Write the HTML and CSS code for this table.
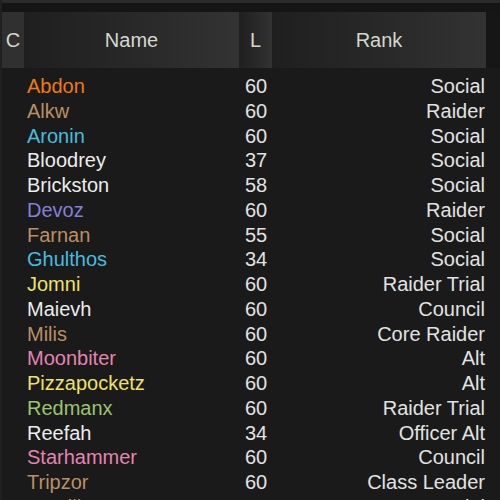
FILE: index.html
```html
<!DOCTYPE html>
<html lang="en">
<head>
    <meta charset="UTF-8">
    <meta name="viewport" content="width=device-width, initial-scale=1.0">
    <title>Guild Roster</title>
    <link rel="stylesheet" href="styles.css">
</head>
<body>
    <div class="roster">
        <div class="top-strip"></div>
        <div class="header">
            <div class="col-head class-head">C</div>
            <div class="col-head">Name</div>
            <div class="col-head">L</div>
            <div class="col-head">Rank</div>
        </div>
        <div class="rows">
            <div class="row"><span></span><span class="name druid">Abdon</span><span class="level">60</span><span class="rank">Social</span></div>
            <div class="row"><span></span><span class="name warrior">Alkw</span><span class="level">60</span><span class="rank">Raider</span></div>
            <div class="row"><span></span><span class="name mage">Aronin</span><span class="level">60</span><span class="rank">Social</span></div>
            <div class="row"><span></span><span class="name priest">Bloodrey</span><span class="level">37</span><span class="rank">Social</span></div>
            <div class="row"><span></span><span class="name priest">Brickston</span><span class="level">58</span><span class="rank">Social</span></div>
            <div class="row"><span></span><span class="name warlock">Devoz</span><span class="level">60</span><span class="rank">Raider</span></div>
            <div class="row"><span></span><span class="name warrior">Farnan</span><span class="level">55</span><span class="rank">Social</span></div>
            <div class="row"><span></span><span class="name mage">Ghulthos</span><span class="level">34</span><span class="rank">Social</span></div>
            <div class="row"><span></span><span class="name rogue">Jomni</span><span class="level">60</span><span class="rank">Raider Trial</span></div>
            <div class="row"><span></span><span class="name priest">Maievh</span><span class="level">60</span><span class="rank">Council</span></div>
            <div class="row"><span></span><span class="name warrior">Milis</span><span class="level">60</span><span class="rank">Core Raider</span></div>
            <div class="row"><span></span><span class="name paladin">Moonbiter</span><span class="level">60</span><span class="rank">Alt</span></div>
            <div class="row"><span></span><span class="name rogue">Pizzapocketz</span><span class="level">60</span><span class="rank">Alt</span></div>
            <div class="row"><span></span><span class="name hunter">Redmanx</span><span class="level">60</span><span class="rank">Raider Trial</span></div>
            <div class="row"><span></span><span class="name priest">Reefah</span><span class="level">34</span><span class="rank">Officer Alt</span></div>
            <div class="row"><span></span><span class="name paladin">Starhammer</span><span class="level">60</span><span class="rank">Council</span></div>
            <div class="row"><span></span><span class="name warrior">Tripzor</span><span class="level">60</span><span class="rank">Class Leader</span></div>
            <div class="row"><span></span><span class="name warrior">Vandilyn</span><span class="level">34</span><span class="rank">Social</span></div>
        </div>
    </div>
</body>
</html>
```

FILE: styles.css
```css
body {
    margin: 0;
    background-color: #1a1a1a;
    font-family: "Liberation Sans", Arial, sans-serif;
    overflow: hidden;
}
.roster {
    width: 500px;
    height: 500px;
    background: #1a1a1a;
    border-left: 2px solid #202020;
    box-sizing: border-box;
}
.top-strip {
    height: 3px;
    background: #2a2a2a;
    border-bottom: 9px solid #151515;
}
.header {
    display: grid;
    grid-template-columns: 22px 215px 33px 214px;
    height: 56px;
    background: #161616;
}
.col-head {
    display: flex;
    align-items: center;
    justify-content: center;
    font-size: 20px;
    color: #d5d7cf;
    background: linear-gradient(to right, #1f1f1f, #2c2c2c 70%, #333333);
}
.class-head {
    background: #303030;
}
.rows {
    padding-top: 6px;
}
.row {
    display: grid;
    grid-template-columns: 22px 215px 33px 214px;
    height: 24.75px;
    line-height: 24.75px;
    font-size: 20px;
    color: #e2e2e2;
}
.name {
    padding-left: 3px;
    white-space: nowrap;
}
.level {
    padding-left: 6px;
}
.rank {
    text-align: right;
    padding-right: 1px;
    white-space: nowrap;
}
.druid { color: #f07a12; }
.warrior { color: #b98f66; }
.mage { color: #46bddd; }
.priest { color: #ececec; }
.warlock { color: #8480d6; }
.rogue { color: #eee268; }
.paladin { color: #e484b0; }
.hunter { color: #9cc56c; }
```
